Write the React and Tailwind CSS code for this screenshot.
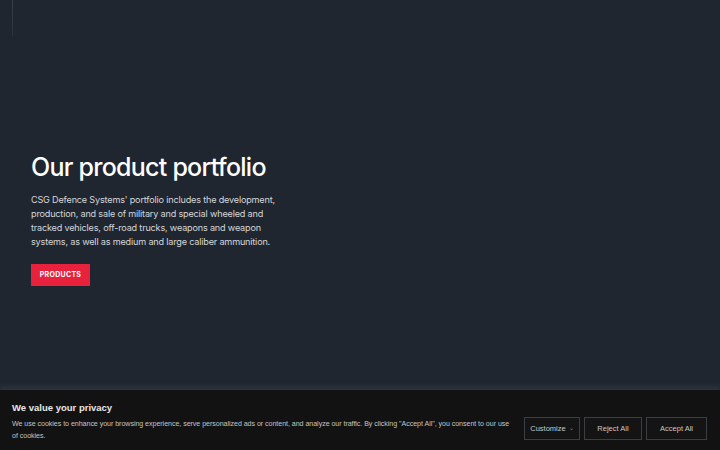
export default function App() {
  return (
    <div className="relative h-[450px] w-[720px] overflow-hidden bg-[#1f262f] font-['Inter',sans-serif] text-white">
      {/* header rule */}
      <div className="h-[36px] pl-[12px]">
        <div className="h-full w-px bg-gradient-to-b from-[#39414b] to-[#2a313a]" />
      </div>

      {/* hero */}
      <section className="pl-[31px] pt-[116px]">
        <h1 className="text-[25px] font-medium leading-[31px] tracking-[-0.75px] text-white">Our product portfolio</h1>
        <p className="mt-[10px] whitespace-nowrap text-[9.1px] leading-[14px] tracking-[-0.18px] text-[#d4d7db]">
          CSG Defence Systems' portfolio includes the development,<br />
          production, and sale of military and special wheeled and<br />
          tracked vehicles, off-road trucks, weapons and weapon<br />
          systems, as well as medium and large caliber ammunition.
        </p>
        <button className="mt-[15px] flex h-[22px] w-[59px] items-center justify-center bg-[#e8213d] text-[7px] font-bold tracking-[0.3px] text-white">
          PRODUCTS
        </button>
      </section>

      {/* cookie banner */}
      <div className="absolute inset-x-0 bottom-0 h-[60px] bg-[#121212] shadow-[0_-3px_6px_rgba(70,78,90,0.45)]">
        <div className="flex h-full items-start justify-between pl-[12px] pr-[13px] pt-[11px]">
          <div className="w-[505px]">
            <h2 className="font-['Liberation_Sans',sans-serif] text-[9.5px] font-bold leading-[13px] text-[#e8e8e8]">We value your privacy</h2>
            <p className="mt-[4px] whitespace-nowrap font-['Liberation_Sans',sans-serif] text-[7.1px] leading-[12px] tracking-[-0.05px] text-[#c4c4c4]">
              We use cookies to enhance your browsing experience, serve personalized ads or content, and analyze our traffic. By clicking "Accept All", you consent to our use<br />
              of cookies.
            </p>
          </div>
          <div className="mt-[16px] flex gap-[4px] font-['Liberation_Sans',sans-serif] text-[7.5px] text-[#c8c8c8]">
            <button className="flex h-[23px] w-[56px] items-center justify-center gap-[3px] border border-[#3b3e43] bg-[#141414]">
              Customize <span className="text-[6px] text-[#888]">⌄</span>
            </button>
            <button className="h-[23px] w-[58px] border border-[#3b3e43] bg-[#141414]">Reject All</button>
            <button className="h-[23px] w-[61px] border border-[#3b3e43] bg-[#141414]">Accept All</button>
          </div>
        </div>
      </div>
    </div>
  );
}
